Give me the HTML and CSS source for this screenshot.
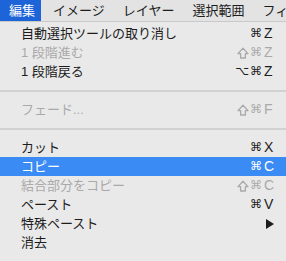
FILE: index.html
```html
<!DOCTYPE html>
<html lang="ja">
<head>
<meta charset="utf-8">
<link rel="stylesheet" href="styles.css">
</head>
<body>
<div class="bar">
  <span class="bar-item active">編集</span>
  <span class="bar-item">イメージ</span>
  <span class="bar-item">レイヤー</span>
  <span class="bar-item">選択範囲</span>
  <span class="bar-item">フィルター</span>
</div>
<div class="menu">
  <div class="item"><span class="label">自動選択ツールの取り消し</span><span class="sc"><span class="mods">⌘</span><span class="key">Z</span></span></div>
  <div class="item disabled"><span class="label">1 段階進む</span><span class="sc"><svg class="shift" viewBox="0 0 12 12"><path d="M6 1.2 L11 6.6 H8.4 V11 H3.6 V6.6 H1 Z"/></svg><span class="mods">⌘</span><span class="key">Z</span></span></div>
  <div class="item"><span class="label">1 段階戻る</span><span class="sc"><span class="mods">⌥⌘</span><span class="key">Z</span></span></div>
  <div class="sep"></div>
  <div class="item disabled"><span class="label">フェード...</span><span class="sc"><svg class="shift" viewBox="0 0 12 12"><path d="M6 1.2 L11 6.6 H8.4 V11 H3.6 V6.6 H1 Z"/></svg><span class="mods">⌘</span><span class="key">F</span></span></div>
  <div class="sep"></div>
  <div class="item"><span class="label">カット</span><span class="sc"><span class="mods">⌘</span><span class="key">X</span></span></div>
  <div class="item selected"><span class="label">コピー</span><span class="sc"><span class="mods">⌘</span><span class="key">C</span></span></div>
  <div class="item disabled"><span class="label">結合部分をコピー</span><span class="sc"><svg class="shift" viewBox="0 0 12 12"><path d="M6 1.2 L11 6.6 H8.4 V11 H3.6 V6.6 H1 Z"/></svg><span class="mods">⌘</span><span class="key">C</span></span></div>
  <div class="item"><span class="label">ペースト</span><span class="sc"><span class="mods">⌘</span><span class="key">V</span></span></div>
  <div class="item"><span class="label">特殊ペースト</span><span class="sc"><span class="arrow"></span></span></div>
  <div class="item"><span class="label">消去</span></div>
</div>
</body>
</html>
```
FILE: styles.css
```css
html, body {
  margin: 0;
  padding: 0;
}
body {
  width: 286px;
  height: 261px;
  overflow: hidden;
  background: #e9e9ea;
  font-family: "Liberation Sans", "Noto Sans CJK JP", sans-serif;
  font-size: 13px;
  color: #1c1c1c;
}
.bar {
  display: flex;
  height: 21px;
  background: #e3e3e3;
  border-bottom: 1px solid #c9c9c9;
  white-space: nowrap;
  overflow: hidden;
}
.bar-item {
  padding: 0 9px;
  line-height: 21px;
  flex: none;
}
.bar-item.active {
  background: #1d64d8;
  color: #fff;
  padding-right: 6px;
  margin-right: 3px;
}
.menu {
  padding-top: 2px;
}
.item {
  display: flex;
  align-items: center;
  height: 19px;
  line-height: 19px;
  padding: 0 11px 0 21px;
}
.item .label {
  flex: 1;
  white-space: nowrap;
}
.item.disabled {
  color: #a9a9a9;
}
.item.selected {
  background: #3b8bf5;
  color: #fff;
}
.sc {
  display: flex;
  align-items: center;
  justify-content: flex-end;
}
.shift {
  width: 12px;
  height: 12px;
  margin-right: 1px;
  fill: none;
  stroke: currentColor;
  stroke-width: 1.3;
  stroke-linejoin: round;
}
.mods {
  font-family: "DejaVu Sans", sans-serif;
  font-size: 12px;
  letter-spacing: 1px;
}
.key {
  width: 11px;
  margin-left: 1px;
  text-align: left;
  font-size: 14px;
}
.arrow {
  width: 0;
  height: 0;
  border-top: 5px solid transparent;
  border-bottom: 5px solid transparent;
  border-left: 8px solid #1c1c1c;
  margin-right: 1px;
}
.sep {
  height: 19px;
  display: flex;
  align-items: center;
}
.sep::before {
  content: "";
  flex: 1;
  height: 2px;
  background: #d2d2d2;
}
```
